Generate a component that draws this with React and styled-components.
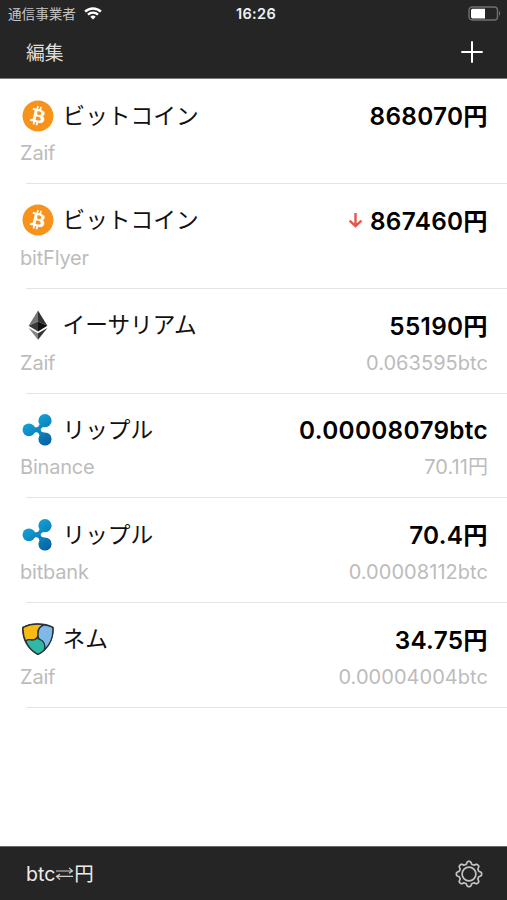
import React, { useState } from 'react';
import styled, { createGlobalStyle } from 'styled-components';
import { FaBitcoin } from 'react-icons/fa';

const GlobalStyle = createGlobalStyle`
  * {
    box-sizing: border-box;
  }
  body {
    margin: 0;
    background: #fff;
    font-family: Inter, "Noto Sans CJK JP", sans-serif;
  }
  button {
    padding: 0;
    border: 0;
    background: none;
    color: inherit;
    font: inherit;
  }
  svg {
    display: block;
  }
`;

const Screen = styled.div`
  display: flex;
  flex-direction: column;
  width: 507px;
  height: 900px;
  background: #fff;
`;

const Header = styled.header`
  flex: none;
  height: 79px;
  color: #f2f2f2;
  background: #252525;
  border-bottom: 1px solid #7c7c7c;
`;

const StatusBar = styled.div`
  display: grid;
  grid-template-columns: 1fr auto 1fr;
  align-items: center;
  height: 27px;
  padding: 0 6px 0 8px;
`;

const Carrier = styled.div`
  display: flex;
  align-items: center;
  gap: 8px;
  font-size: 13.6px;
  line-height: 26px;
  color: #c4c4c4;
`;

const Clock = styled.div`
  padding-left: 3px;
  font-size: 14.5px;
  font-weight: 600;
  letter-spacing: 0.35px;
  line-height: 27px;
`;

const Battery = styled.svg`
  justify-self: end;
`;

const NavBar = styled.nav`
  display: flex;
  align-items: center;
  justify-content: space-between;
  height: 50px;
  padding: 0 24px 0 26px;
`;

const EditButton = styled.button`
  padding-top: 3px;
  font-size: 18.8px;
  line-height: 50px;
  color: #dedede;
`;

const List = styled.ul`
  flex: 1;
  margin: 0;
  padding: 0;
  list-style: none;
`;

const Row = styled.li`
  height: 104.75px;
  padding: 17px 19px 0 20px;
`;

const Line = styled.div`
  display: flex;
  align-items: center;
  justify-content: space-between;
  height: ${({ $height }) => $height}px;
`;

const Coin = styled.div`
  display: flex;
  align-items: center;
  gap: 9px;
  padding-left: 1.5px;
`;

const CoinIcon = styled.div`
  width: 32px;
  height: 32px;
  color: #f7931a;
`;

const Name = styled.span`
  padding-bottom: 2px;
  font-family: "Noto Sans CJK JP", sans-serif;
  font-size: 22.7px;
  line-height: 36px;
  color: #111;
`;

const Price = styled.div`
  display: flex;
  align-items: center;
  gap: 7px;
  padding-top: 1px;
  font-size: 24.3px;
  font-weight: 600;
  line-height: 38px;
  letter-spacing: 0.33px;
  color: #000;
`;

const Sub = styled.span`
  font-size: 20px;
  line-height: 36px;
  letter-spacing: ${({ $spacing }) => $spacing}px;
  color: #bcbcbc;
`;

const Separator = styled.div`
  height: 1px;
  margin: 12px -19px 0 6px;
  background: #e4e4e4;
`;

const Footer = styled.footer`
  display: flex;
  flex: none;
  align-items: center;
  justify-content: space-between;
  height: 54px;
  padding: 0 24px 0 26px;
  color: #ececec;
  background: #252525;
  border-top: 1px solid #6a6a6a;
`;

const SwapButton = styled.button`
  display: flex;
  align-items: center;
  font-size: 19.5px;
  line-height: 52px;
`;

const WifiIcon = () => (
  <svg width="18" height="13" viewBox="0 0 18 13" fill="none" stroke="#fff" strokeWidth="2.4">
    <path d="M1.1 4.7a11.2 11.2 0 0 1 15.8 0" />
    <path d="M4 7.7a7 7 0 0 1 10 0" />
    <path d="M9 12.4 6.3 9.7a3.9 3.9 0 0 1 5.4 0z" fill="#fff" stroke="none" />
  </svg>
);

const BatteryIcon = () => (
  <Battery width="33" height="15" viewBox="0 0 33 15">
    <rect x="1" y="1" width="28.5" height="13" rx="3.2" fill="none" stroke="#707070" strokeWidth="1.4" />
    <path d="M3 4.4A1.6 1.6 0 0 1 4.6 2.8H17v9.6H4.6A1.6 1.6 0 0 1 3 10.8z" fill="#fff" />
    <path d="M31 5.3c1.6.6 1.6 3.8 0 4.4z" fill="#707070" />
  </Battery>
);

const PlusIcon = () => (
  <svg width="22" height="22" viewBox="0 0 22 22" stroke="#fff" strokeWidth="2">
    <path d="M11 .3v21.4M.3 11h21.4" />
  </svg>
);

const DownIcon = () => (
  <svg width="15" height="17" viewBox="0 0 15 17" fill="none" stroke="#e2574c" strokeWidth="2.4">
    <path d="M7.5 1v13.500M1.600 8.600l5.900 5.600 5.900-5.600" />
  </svg>
);

const SwapIcon = () => (
  <svg width="19" height="14" viewBox="0 0 19 14" fill="none" stroke="#cfcfcf" strokeWidth="1.2">
    <path d="M1 4h16.500M14 .9l3.500 3.100-3.500 2.200M18 9.400H1.500M5 12.500l-3.500-3.100L5 7.200" />
  </svg>
);

const GEAR_TEETH = 8;
const gearPath = Array.from({ length: GEAR_TEETH * 12 }, (_, i) => {
  const angle = (i / (GEAR_TEETH * 12)) * Math.PI * 2;
  const wave = Math.max(-1, Math.min(1, Math.cos(angle * GEAR_TEETH) * 1.6));
  const r = 11.3 + wave * 1.3;
  return `${i ? 'L' : 'M'}${(14 + r * Math.sin(angle)).toFixed(2)} ${(14 - r * Math.cos(angle)).toFixed(2)}`;
}).join('') + 'Z';

const GearIcon = () => (
  <svg width="28" height="28" viewBox="0 0 28 28" fill="none" stroke="#c4c4c4" strokeWidth="1.7" strokeLinejoin="round">
    <path d={gearPath} />
    <circle cx="14" cy="14" r="6.9" />
  </svg>
);

const EthereumIcon = () => (
  <svg width="32" height="32" viewBox="0 0 32 32">
    <path d="M16 1.4 6.6 16.8 16 12.6z" fill="#777" />
    <path d="M16 1.4 25.4 16.8 16 12.6z" fill="#333" />
    <path d="M6.6 16.8 16 12.6v9.8z" fill="#3a3a3a" />
    <path d="M25.4 16.8 16 12.6v9.8z" fill="#111" />
    <path d="M6.6 19 16 24.3v6.5z" fill="#858585" />
    <path d="M25.4 19 16 24.3v6.5z" fill="#363636" />
  </svg>
);

const RippleIcon = () => (
  <svg width="32" height="32" viewBox="0 0 32 32">
    <defs>
      <linearGradient id="ripple" gradientUnits="userSpaceOnUse" x1="8" y1="5" x2="25" y2="31">
        <stop offset="0" stopColor="#12a5d8" />
        <stop offset="1" stopColor="#0863a5" />
      </linearGradient>
    </defs>
    <g fill="url(#ripple)">
      <circle cx="6.9" cy="15.8" r="6.4" />
      <circle cx="23" cy="6.7" r="6.6" />
      <circle cx="23" cy="25" r="6.6" />
      <path d="M11 11.5c2.3 3.1 6.500 1.900 6.100-1.200l5.400 2.700c-4.900.1-5.100 5.500 0 5.600l-5.400 2.700c.4-3.100-3.800-4.300-6.100-1.200z" />
    </g>
  </svg>
);

const NemIcon = () => (
  <svg width="32" height="32" viewBox="0 0 32 32" stroke="#293238" strokeWidth="1.3" strokeLinejoin="round">
    <path d="M.8 4.3C9.5-.1 22.2-.1 31 4.3c.9 12.2-5.8 22.3-15.1 27C6.6 26.600 0 16.500.8 4.300z" fill="#293238" />
    <path d="M1.100 4.500C7 1.500 15.500.5 22.300 1.900c-5.500 1.900-6.700 5.400-6.200 8.900.5 4-3.800 7-7.300 6-3.300-.9-4.700 1-4.900 2C1.800 14.400.7 9.600 1.100 4.500z" fill="#f8ba13" />
    <path d="M22.300 1.900c3 .5 6.100 1.400 8.500 2.600.8 9.200-2.700 17.200-8.600 22.800 1.300-4.600-.1-9.300-4.300-10.800-2.400-1.500-1.800-4.100-1.800-5.700-.3-4 1.800-7.500 6.200-8.900z" fill="#7fb9e9" />
    <path d="M3.900 18.800c.5-2 2.500-2.700 4.900-2 3 .7 5.600-.8 7.300-2.300-.1 1 .6 1.700 1.800 2 4.400 1.600 5.600 6.200 4.300 10.800-1.700 1.600-4.100 3.100-6.300 4-5.300-2.700-9.700-7.300-12-12.500z" fill="#2fb8a6" />
  </svg>
);

const icons = {
  btc: () => <FaBitcoin size={32} />,
  eth: EthereumIcon,
  xrp: RippleIcon,
  xem: NemIcon,
};

const rates = [
  { coin: 'btc', name: 'ビットコイン', exchange: 'Zaif', price: '868070円' },
  { coin: 'btc', name: 'ビットコイン', exchange: 'bitFlyer', price: '867460円', down: true },
  { coin: 'eth', name: 'イーサリアム', exchange: 'Zaif', price: '55190円', converted: '0.063595btc' },
  { coin: 'xrp', name: 'リップル', exchange: 'Binance', price: '0.00008079btc', converted: '70.11円' },
  { coin: 'xrp', name: 'リップル', exchange: 'bitbank', price: '70.4円', converted: '0.00008112btc' },
  { coin: 'xem', name: 'ネム', exchange: 'Zaif', price: '34.75円', converted: '0.00004004btc' },
];

const RateRow = ({ coin, name, exchange, price, converted, down }) => {
  const Icon = icons[coin];
  return (
    <Row>
      <Line $height={39}>
        <Coin>
          <CoinIcon><Icon /></CoinIcon>
          <Name>{name}</Name>
        </Coin>
        <Price>
          {down && <DownIcon />}
          <span>{price}</span>
        </Price>
      </Line>
      <Line $height={36}>
        <Sub $spacing={-0.2}>{exchange}</Sub>
        {converted && <Sub $spacing={0.05}>{converted}</Sub>}
      </Line>
      <Separator />
    </Row>
  );
};

export default function App() {
  const [swapped, setSwapped] = useState(false);
  return (
    <Screen>
      <GlobalStyle />
      <Header>
        <StatusBar>
          <Carrier>通信事業者<WifiIcon /></Carrier>
          <Clock>16:26</Clock>
          <BatteryIcon />
        </StatusBar>
        <NavBar>
          <EditButton>編集</EditButton>
          <button><PlusIcon /></button>
        </NavBar>
      </Header>
      <List>
        {rates.map((rate, i) => <RateRow key={i} {...rate} />)}
      </List>
      <Footer>
        <SwapButton onClick={() => setSwapped(!swapped)}>
          <span>{swapped ? '円' : 'btc'}</span>
          <SwapIcon />
          <span>{swapped ? 'btc' : '円'}</span>
        </SwapButton>
        <button><GearIcon /></button>
      </Footer>
    </Screen>
  );
}
